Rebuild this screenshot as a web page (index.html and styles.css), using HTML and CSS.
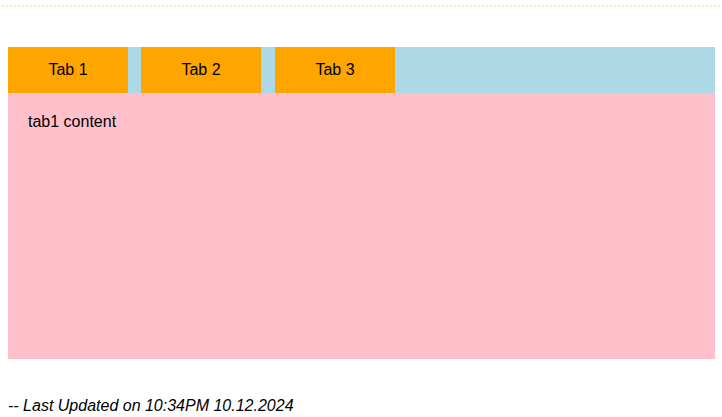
FILE: index.html
```html
<!DOCTYPE html>
<html>
<head>
<meta charset="utf-8">
<link rel="stylesheet" href="styles.css">
</head>
<body>
<div class="rule"></div>
<div class="page">
  <div class="tabs">
    <div class="tab">Tab 1</div>
    <div class="tab">Tab 2</div>
    <div class="tab tab-last">Tab 3</div>
  </div>
  <div class="content">tab1 content</div>
  <p class="updated">-- Last Updated on 10:34PM 10.12.2024</p>
</div>
</body>
</html>
```
FILE: styles.css
```css
html, body {
  margin: 0;
  padding: 0;
  background: #fff;
}
body {
  font-family: "Liberation Sans", Arial, sans-serif;
  font-size: 16px;
  color: #000;
}
.rule {
  margin: 5px 2px 0 2px;
  border-top: 2px dotted #efebcc;
}
.page {
  margin: 40px 7px 0 8px;
}
.tabs {
  display: flex;
  gap: 13px;
  background: #add8e6;
  height: 46px;
}
.tab {
  width: 120px;
  background: #ffa500;
  line-height: 46px;
  text-align: center;
}
.tab-last {
  margin-left: 1px;
}
.content {
  background: #ffc0cb;
  height: 266px;
  box-sizing: border-box;
  padding: 20px 20px;
}
.updated {
  margin: 38px 0 0 0;
  font-style: italic;
}
```
